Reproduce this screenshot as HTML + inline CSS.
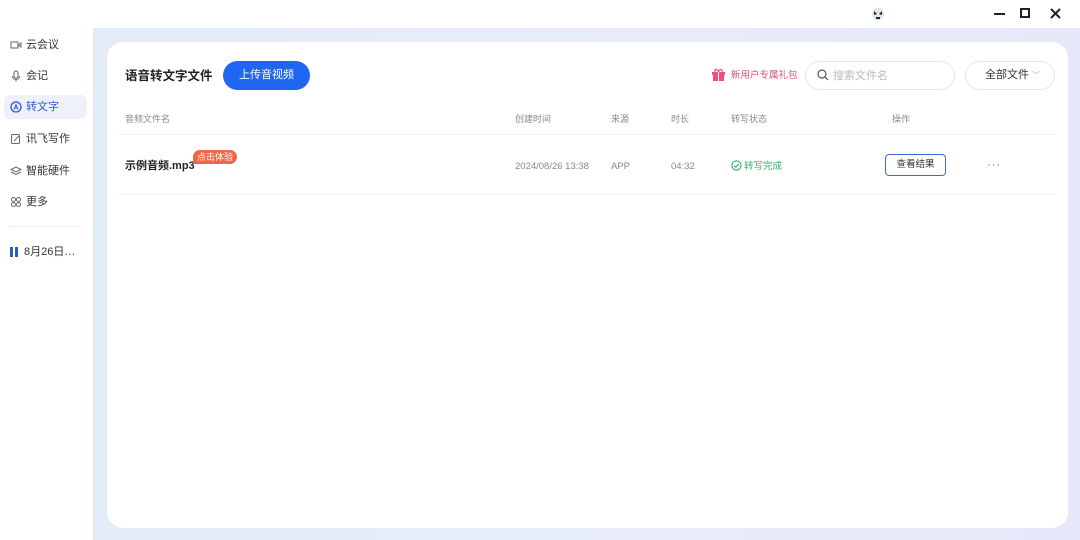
<!DOCTYPE html>
<html><head><meta charset="utf-8">
<style>
*{margin:0;padding:0;box-sizing:border-box;line-height:1}
body{width:1080px;height:540px;overflow:hidden;background:#fff;font-family:"Liberation Sans","Noto Sans CJK SC",sans-serif;position:relative;color:#222}
.abs{position:absolute}
.main{left:93px;top:28px;width:987px;height:512px;background:linear-gradient(90deg,#e3ebf8,#e8ecf9 60%,#e4e8f8)}
.card{left:107px;top:42px;width:961px;height:486px;background:#fff;border-radius:16px}
.nav{left:10px;font-size:11px;color:#333;display:flex;align-items:center;gap:4px;height:12px}
.nav svg{width:12px;height:12px}
.hd{font-size:9px;color:#888;top:115px}
.cell{font-size:9.5px;color:#888;top:161.5px}
</style></head><body>
<div class="abs" style="left:871px;top:6px;width:14px;height:16px">
<svg width="14" height="16" viewBox="0 0 14 16"><ellipse cx="7" cy="8" rx="6" ry="6.5" fill="#dfe6ef"/><path d="M3 5l3 3-3 1zM11 5l-3 3 3 1z" fill="#222"/><rect x="5" y="11" width="4" height="2" fill="#222"/></svg></div>
<div class="abs" style="left:994px;top:13px;width:11px;height:2px;background:#222"></div>
<div class="abs" style="left:1020px;top:8px;width:10px;height:10px;border:2px solid #222"></div>
<svg class="abs" style="left:1050px;top:8px" width="11" height="11" viewBox="0 0 11 11"><path d="M1 1l9 9M10 1l-9 9" stroke="#222" stroke-width="2"/></svg>

<div class="abs nav" style="top:39px"><svg viewBox="0 0 12 12"><rect x="1" y="3" width="7" height="6" fill="none" stroke="#666"/><path d="M8 6l3-2v4z" fill="none" stroke="#666"/></svg>云会议</div>
<div class="abs nav" style="top:70px"><svg viewBox="0 0 12 12"><rect x="4" y="1" width="4" height="7" rx="2" fill="none" stroke="#666"/><path d="M2.5 6a3.5 3.5 0 007 0M6 9.5v2" fill="none" stroke="#666"/></svg>会记</div>
<div class="abs" style="left:4px;top:95px;width:83px;height:24px;background:#eef1f7;border-radius:6px"></div>
<div class="abs nav" style="top:101px;color:#2a5bd7"><svg viewBox="0 0 12 12"><circle cx="6" cy="6" r="5" fill="none" stroke="#2a5bd7" stroke-width="1.3"/><path d="M4 8.5L6 3.5 8 8.5M4.8 7h2.4" fill="none" stroke="#2a5bd7"/></svg>转文字</div>
<div class="abs nav" style="top:133px"><svg viewBox="0 0 12 12"><rect x="1.5" y="1.5" width="8" height="9" rx="1" fill="none" stroke="#666"/><path d="M4 8l5-5" stroke="#666"/></svg>讯飞写作</div>
<div class="abs nav" style="top:165px"><svg viewBox="0 0 12 12"><path d="M6 2l5 2.5-5 2.5-5-2.5zM1 7l5 2.5 5-2.5" fill="none" stroke="#666"/></svg>智能硬件</div>
<div class="abs nav" style="top:196px"><svg viewBox="0 0 12 12"><circle cx="3.5" cy="3.5" r="2" fill="none" stroke="#666"/><circle cx="8.5" cy="3.5" r="2" fill="none" stroke="#666"/><circle cx="3.5" cy="8.5" r="2" fill="none" stroke="#666"/><circle cx="8.5" cy="8.5" r="2" fill="none" stroke="#666"/></svg>更多</div>
<div class="abs" style="left:10px;top:226px;width:72px;height:1px;background:#eee"></div>
<div class="abs nav" style="top:246px;gap:6px"><span style="display:inline-block;width:8px;height:10px;border-left:3px solid #2a5bd7;border-right:3px solid #2a5bd7"></span>8月26日…</div>

<div class="abs main"></div>
<div class="abs card"></div>
<div class="abs" style="left:125px;top:69.5px;font-size:12.5px;font-weight:bold;color:#222">语音转文字文件</div>
<div class="abs" style="left:223px;top:61px;width:87px;height:29px;background:#1f66f0;border-radius:15px;color:#fff;font-size:11px;text-align:center;line-height:29px">上传音视频</div>
<svg class="abs" style="left:711px;top:67px" width="15" height="15" viewBox="0 0 15 15"><rect x="1" y="5" width="13" height="3" fill="#f0507a"/><rect x="2" y="8" width="11" height="6" fill="#f0507a"/><path d="M7.5 5C6 1 3 2 4 5M7.5 5C9 1 12 2 11 5" fill="none" stroke="#f0507a" stroke-width="1.3"/><rect x="7" y="5" width="1" height="9" fill="#fff"/></svg>
<div class="abs" style="left:731px;top:71px;font-size:9.5px;color:#e0507a">新用户专属礼包</div>
<div class="abs" style="left:805px;top:61px;width:150px;height:29px;border:1px solid #e4e6ea;border-radius:15px"></div>
<svg class="abs" style="left:817px;top:69px" width="12" height="12" viewBox="0 0 12 12"><circle cx="5" cy="5" r="4" fill="none" stroke="#555" stroke-width="1.2"/><path d="M8 8l3 3" stroke="#555" stroke-width="1.2"/></svg>
<div class="abs" style="left:833px;top:70.5px;font-size:11px;color:#bbb">搜索文件名</div>
<div class="abs" style="left:965px;top:61px;width:90px;height:29px;border:1px solid #e4e6ea;border-radius:15px;font-size:11px;color:#333;line-height:27px;padding-left:19px">全部文件 <span style="color:#aaa;font-size:8px">﹀</span></div>

<div class="abs hd" style="left:125px">音频文件名</div>
<div class="abs hd" style="left:515px">创建时间</div>
<div class="abs hd" style="left:611px">来源</div>
<div class="abs hd" style="left:671px">时长</div>
<div class="abs hd" style="left:731px">转写状态</div>
<div class="abs hd" style="left:892px">操作</div>
<div class="abs" style="left:119px;top:134px;width:937px;height:1px;background:#f2f3f5"></div>

<div class="abs" style="left:125px;top:160.5px;font-size:11px;font-weight:bold;color:#222">示例音频.mp3</div>
<div class="abs" style="left:193px;top:150px;width:44px;height:14px;background:#f0664a;border-radius:7px 7px 7px 2px;color:#fff;font-size:9px;text-align:center;line-height:14px">点击体验</div>
<div class="abs cell" style="left:515px">2024/08/26 13:38</div>
<div class="abs cell" style="left:611px">APP</div>
<div class="abs cell" style="left:671px">04:32</div>
<svg class="abs" style="left:731px;top:160px" width="11" height="11" viewBox="0 0 11 11"><circle cx="5.5" cy="5.5" r="4.6" fill="none" stroke="#2fb06a" stroke-width="1.1"/><path d="M3.2 5.6l1.6 1.6 3-3.2" fill="none" stroke="#2fb06a" stroke-width="1.1"/></svg>
<div class="abs cell" style="left:744px;color:#2fb06a">转写完成</div>
<div class="abs" style="left:885px;top:154px;width:61px;height:22px;border:1.5px solid #3a6ad8;border-radius:4px;font-size:9.5px;color:#333;text-align:center;line-height:19px">查看结果</div>
<div class="abs" style="left:987px;top:160px;font-size:11px;color:#666;letter-spacing:1px">···</div>
<div class="abs" style="left:119px;top:194px;width:937px;height:1px;background:#f2f3f5"></div>
</body></html>
